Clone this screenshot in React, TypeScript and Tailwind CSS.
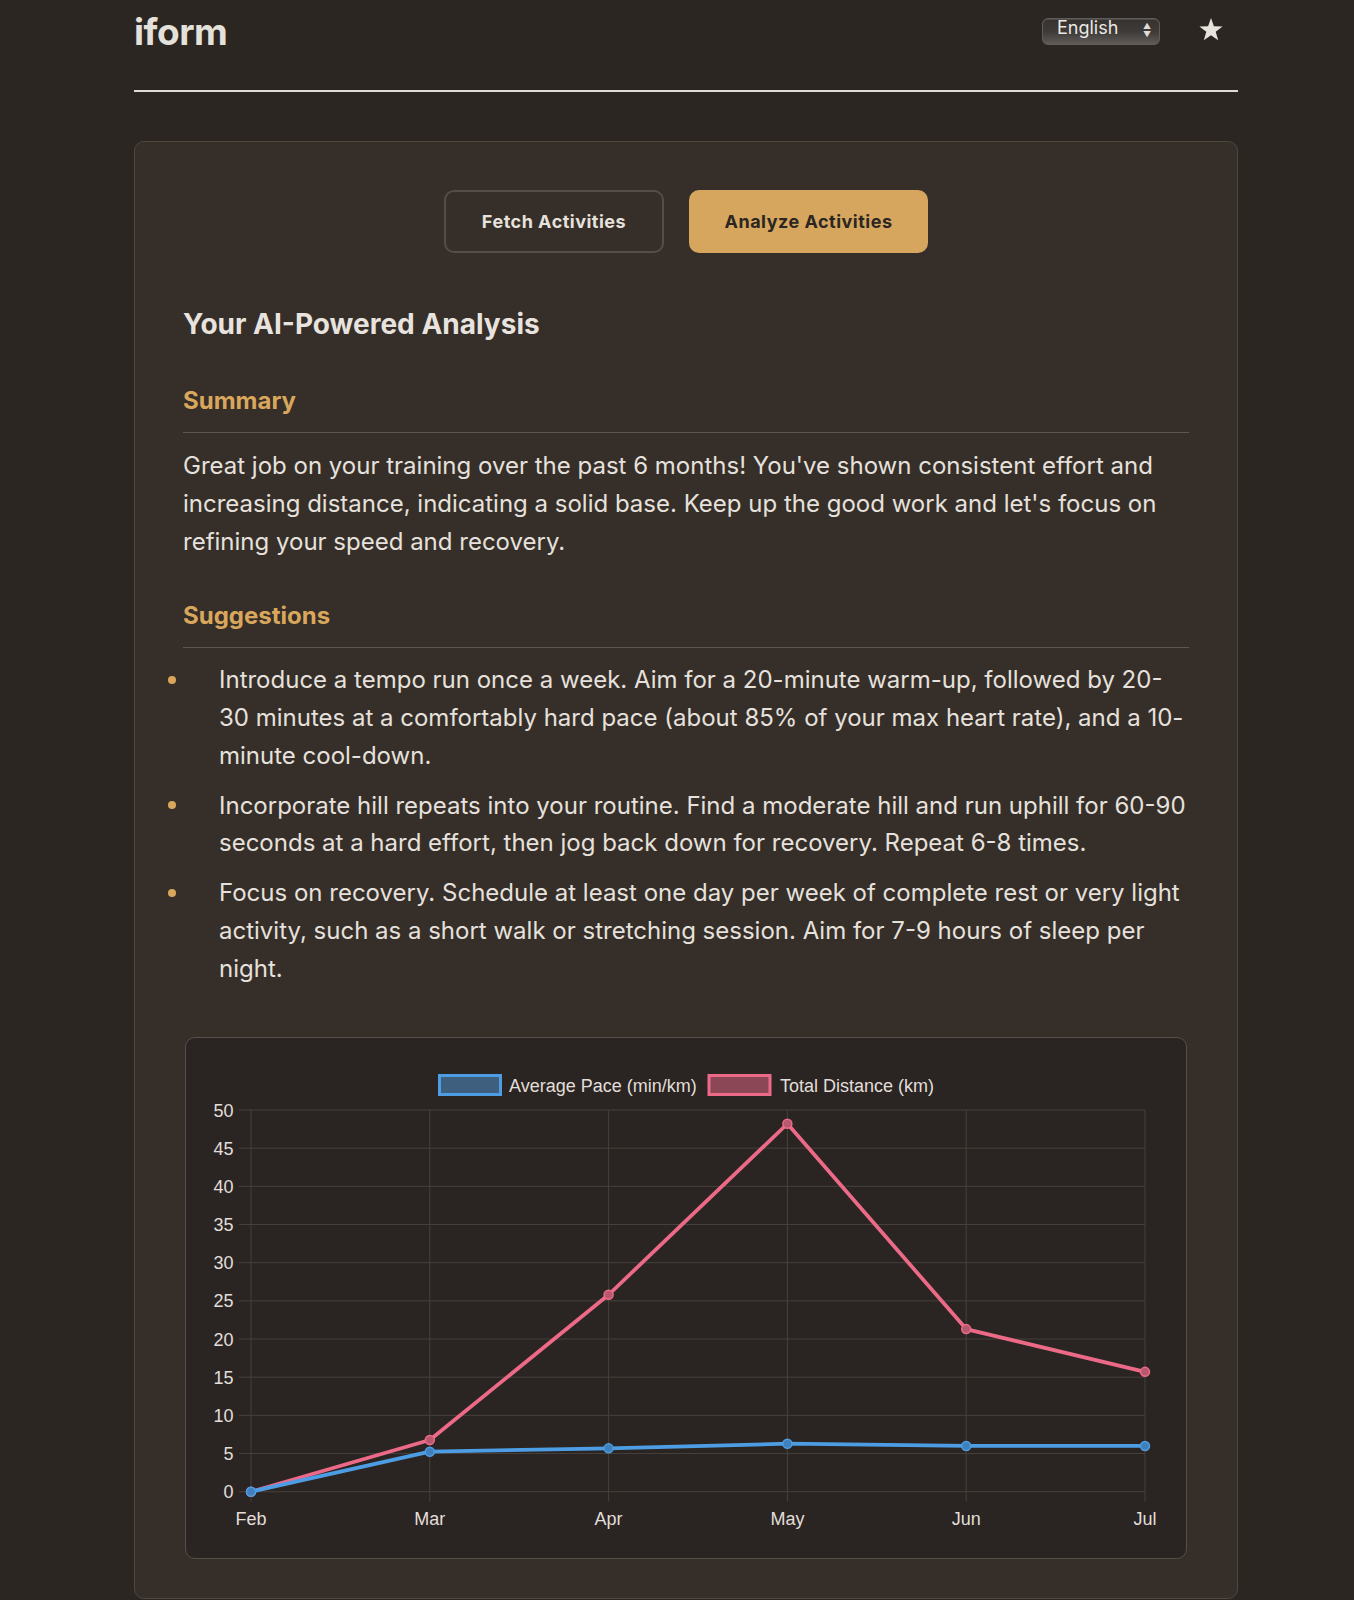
import React from 'react';

const months = ['Feb', 'Mar', 'Apr', 'May', 'Jun', 'Jul'];
const pace = [0, 5.24, 5.68, 6.29, 5.99, 5.99];
const distance = [0, 6.77, 25.8, 48.2, 21.3, 15.7];
const yTicks = [0, 5, 10, 15, 20, 25, 30, 35, 40, 45, 50];

const suggestions = [
  'Introduce a tempo run once a week. Aim for a 20-minute warm-up, followed by 20-30 minutes at a comfortably hard pace (about 85% of your max heart rate), and a 10-minute cool-down.',
  'Incorporate hill repeats into your routine. Find a moderate hill and run uphill for 60-90 seconds at a hard effort, then jog back down for recovery. Repeat 6-8 times.',
  'Focus on recovery. Schedule at least one day per week of complete rest or very light activity, such as a short walk or stretching session. Aim for 7-9 hours of sleep per night.',
];

function ActivityChart() {
  // plot area inside the 1000x520 svg
  const left = 65;
  const right = 959;
  const zero = 453.7;
  const unit = 7.634;
  const step = (right - left) / (months.length - 1);
  const xAt = (i: number) => left + i * step;
  const yAt = (v: number) => zero - v * unit;
  const line = (data: number[]) => data.map((v, i) => `${xAt(i)},${yAt(v)}`).join(' ');

  return (
    <svg width="1000" height="520" viewBox="0 0 1000 520" className="block" style={{ fontFamily: '"Liberation Sans", Arial, sans-serif' }}>
      {/* legend */}
      <rect x="253.5" y="37.5" width="61" height="19" fill="#3f5f7f" stroke="#4d9de4" strokeWidth="3" />
      <text x="323" y="54.3" fontSize="18" fill="#e2ded9">Average Pace (min/km)</text>
      <rect x="523" y="37.5" width="61" height="19" fill="#8c4757" stroke="#ec6a88" strokeWidth="3" />
      <text x="594" y="54.3" fontSize="18" fill="#e2ded9">Total Distance (km)</text>

      {/* grid */}
      {yTicks.map((t) => (
        <g key={t}>
          <line x1={left - 12} x2={right} y1={yAt(t)} y2={yAt(t)} stroke="#46403b" strokeWidth="1" />
          <text x="47.5" y={yAt(t) + 6.5} fontSize="18" fill="#e2ded9" textAnchor="end">
            {t}
          </text>
        </g>
      ))}
      {months.map((m, i) => (
        <g key={m}>
          <line x1={xAt(i)} x2={xAt(i)} y1={yAt(50)} y2={zero + 10} stroke="#46403b" strokeWidth="1" />
          <text x={xAt(i)} y="487" fontSize="18" fill="#e2ded9" textAnchor="middle">
            {m}
          </text>
        </g>
      ))}

      {/* distance under, pace on top */}
      <polyline points={line(distance)} fill="none" stroke="#ec6a88" strokeWidth="3.75" strokeLinejoin="round" />
      {distance.map((v, i) => (
        <circle key={i} cx={xAt(i)} cy={yAt(v)} r="4.5" fill="#b8586f" stroke="#ec6a88" strokeWidth="1.5" />
      ))}
      <polyline points={line(pace)} fill="none" stroke="#4d9de4" strokeWidth="3.75" strokeLinejoin="round" />
      {pace.map((v, i) => (
        <circle key={i} cx={xAt(i)} cy={yAt(v)} r="4.5" fill="#3f80bd" stroke="#4d9de4" strokeWidth="1.5" />
      ))}
    </svg>
  );
}

export default function App() {
  return (
    <div className="min-h-screen bg-[#2b2622] pl-[18px] font-['Inter','Noto_Sans',sans-serif] text-[#e6e1dc]">
      <div className="mx-auto w-[1104px]">
        {/* Header */}
        <header className="flex h-[92px] items-start justify-between border-b-2 border-[#e0dbd5]">
          <h1 className="mt-[9px] text-[37px] font-bold leading-[46px] tracking-[-0.5px] text-[#e4e0da]">iform</h1>
          <div className="flex items-start gap-[39px] pr-[15px]">
            <div className="mt-[18px] flex h-[27px] w-[118px] items-start justify-between rounded-[6px] border border-[#615c58] bg-gradient-to-b from-[#353230] via-[#3d3a37] to-[#5f5b58] pl-[14px] pr-[8px] shadow-[inset_0_1px_0_rgba(255,255,255,0.12)]">
              <span className="-mt-[1px] text-[18px] leading-[20px] text-[#ece8e3]">English</span>
              <span className="mt-[3px] flex flex-col items-center text-[8px] leading-[8px] text-[#e0dcd8]">
                <span>▲</span>
                <span>▼</span>
              </span>
            </div>
            <svg className="mt-[18px]" width="24" height="23" viewBox="0 0 24 23">
              <polygon
                points="12,0 14.9,8.3 23.6,8.5 16.7,13.8 19.2,22.2 12,17.2 4.8,22.2 7.3,13.8 0.4,8.5 9.1,8.3"
                fill="#e6e2dc"
              />
            </svg>
          </div>
        </header>

        {/* Card */}
        <main className="mt-[49px] rounded-[10px] border border-[#50473f] bg-[#352e29] px-12 pb-[39px] pt-12">
          <div className="flex justify-center gap-[25px]">
            <button className="h-[63px] w-[220px] rounded-[10px] border-2 border-[#564d47] text-[18px] font-bold tracking-[0.5px] text-[#e6e1dc]">
              Fetch Activities
            </button>
            <button className="h-[63px] w-[239px] rounded-[10px] bg-[#d6a65e] text-[18px] font-bold tracking-[0.5px] text-[#2b2622]">
              Analyze Activities
            </button>
          </div>

          <h2 className="mt-[53px] text-[28px] font-bold leading-[36px] text-[#e8e3de]">Your AI-Powered Analysis</h2>

          <h3 className="mt-[44px] border-b border-[#5d5550] pb-4 text-[24px] font-bold leading-[30px] text-[#d9a75c]">Summary</h3>
          <p className="mt-[14px] text-[24px] leading-[37.75px]">
            Great job on your training over the past 6 months! You've shown consistent effort and increasing distance, indicating a solid base. Keep up the good work and let's focus on refining your speed and recovery.
          </p>

          <h3 className="mt-[41px] border-b border-[#5d5550] pb-4 text-[24px] font-bold leading-[30px] text-[#d9a75c]">Suggestions</h3>
          <ul className="mt-[13px] flex flex-col gap-[12px]">
            {suggestions.map((s, i) => (
              <li key={i} className="flex text-[24px] leading-[37.75px]">
                <span className="-ml-[12px] flex h-[37.75px] w-[48px] shrink-0 items-center">
                  <span className="ml-[-3px] h-[8px] w-[8px] rounded-full bg-[#d9a75c]" />
                </span>
                <span>{s}</span>
              </li>
            ))}
          </ul>

          <div className="mx-[2px] mt-[50px] overflow-hidden rounded-[10px] border border-[#564e48] bg-[#2a2522]">
            <ActivityChart />
          </div>
        </main>
      </div>
    </div>
  );
}
